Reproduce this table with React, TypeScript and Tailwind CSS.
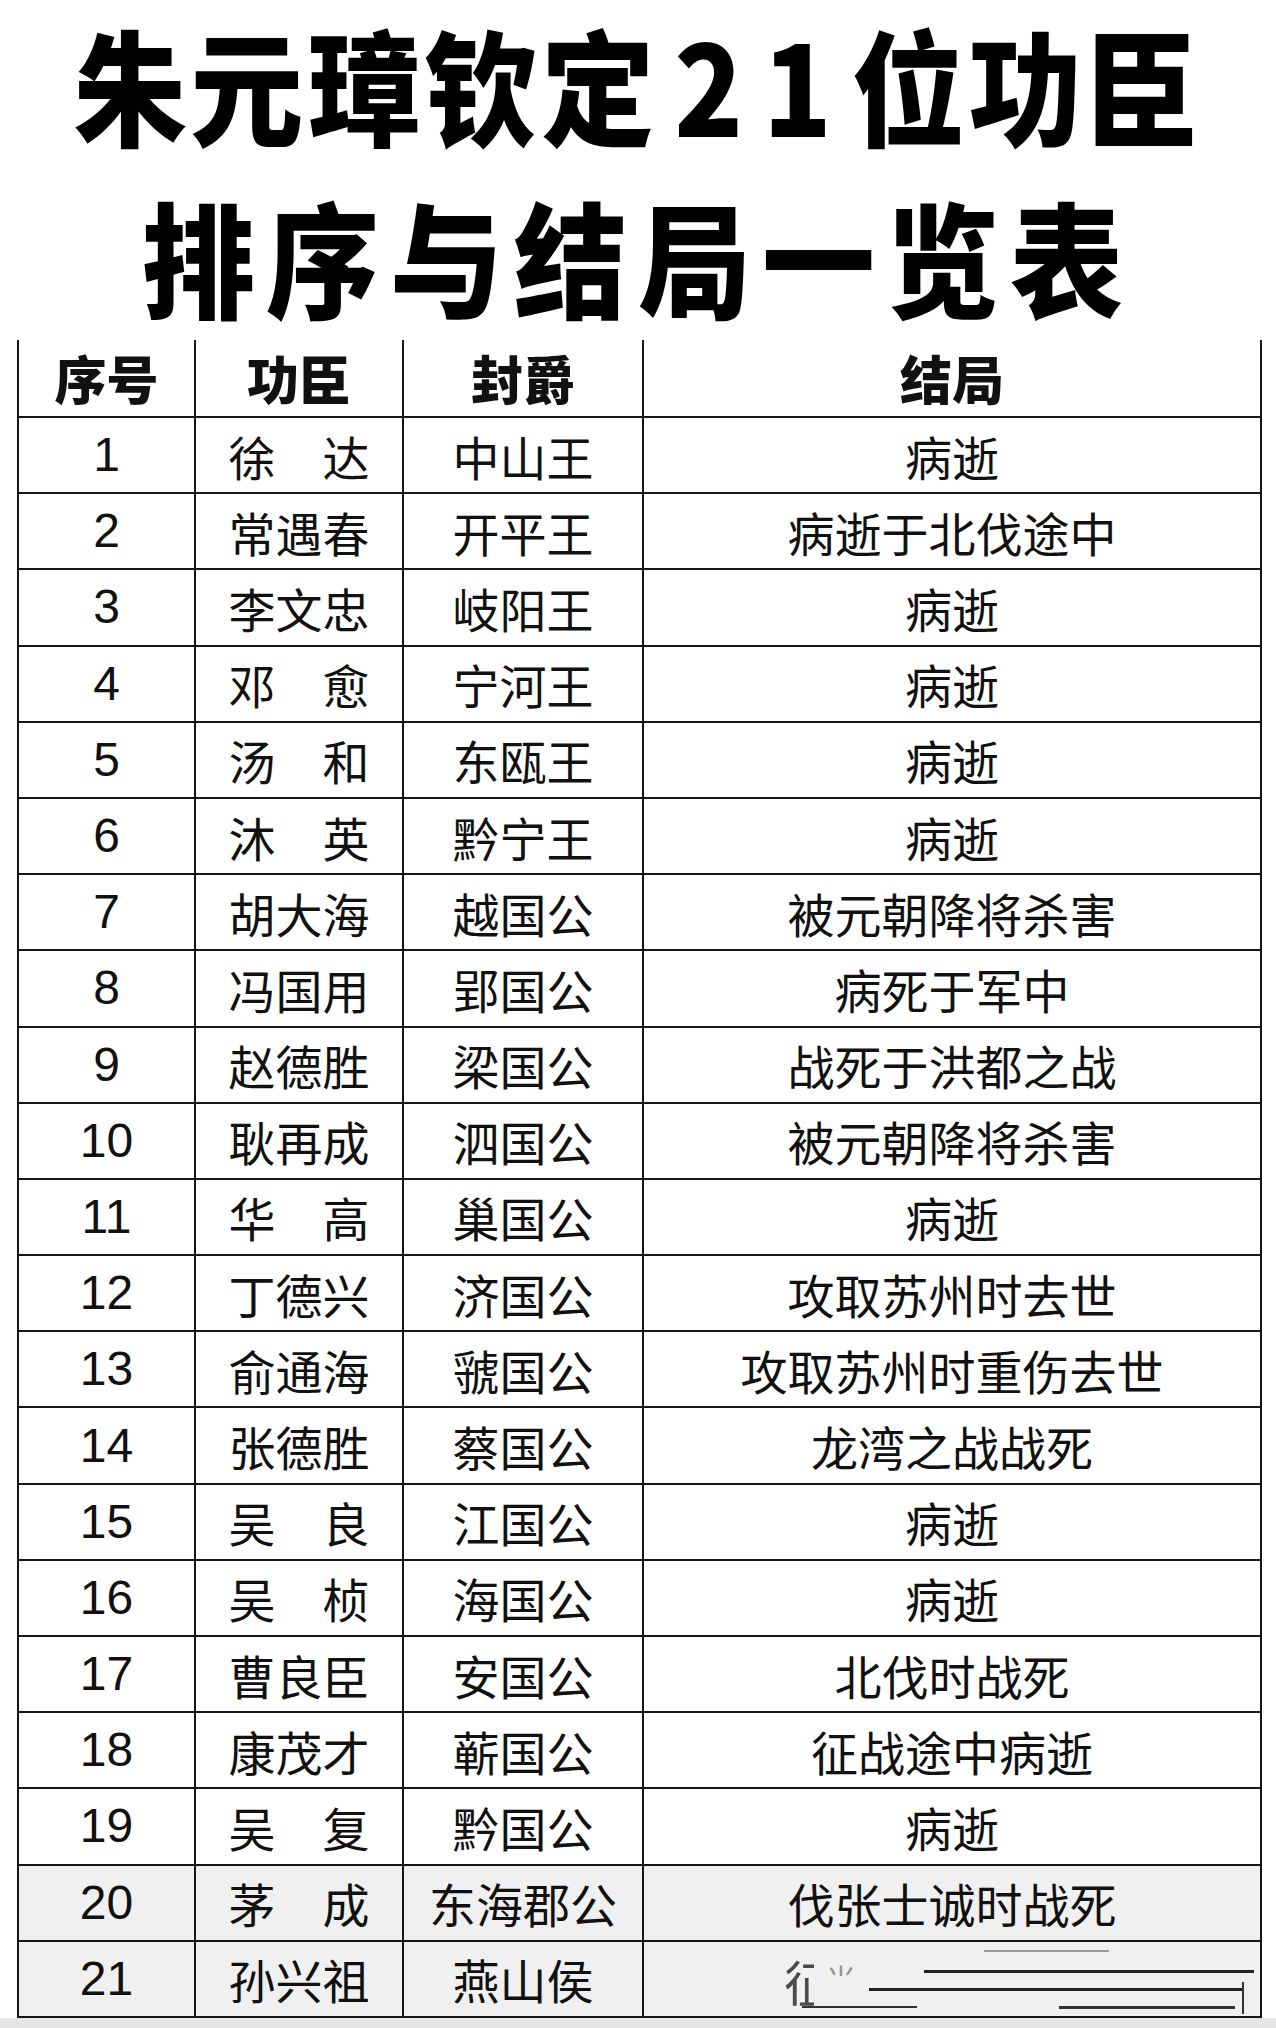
import React from "react";

type Row = {no: number; name: string; title: string; end: string};

const rows: Row[] = [
    {no: 1, name: "徐　达", title: "中山王", end: "病逝"},
    {no: 2, name: "常遇春", title: "开平王", end: "病逝于北伐途中"},
    {no: 3, name: "李文忠", title: "岐阳王", end: "病逝"},
    {no: 4, name: "邓　愈", title: "宁河王", end: "病逝"},
    {no: 5, name: "汤　和", title: "东瓯王", end: "病逝"},
    {no: 6, name: "沐　英", title: "黔宁王", end: "病逝"},
    {no: 7, name: "胡大海", title: "越国公", end: "被元朝降将杀害"},
    {no: 8, name: "冯国用", title: "郢国公", end: "病死于军中"},
    {no: 9, name: "赵德胜", title: "梁国公", end: "战死于洪都之战"},
    {no: 10, name: "耿再成", title: "泗国公", end: "被元朝降将杀害"},
    {no: 11, name: "华　高", title: "巢国公", end: "病逝"},
    {no: 12, name: "丁德兴", title: "济国公", end: "攻取苏州时去世"},
    {no: 13, name: "俞通海", title: "虢国公", end: "攻取苏州时重伤去世"},
    {no: 14, name: "张德胜", title: "蔡国公", end: "龙湾之战战死"},
    {no: 15, name: "吴　良", title: "江国公", end: "病逝"},
    {no: 16, name: "吴　桢", title: "海国公", end: "病逝"},
    {no: 17, name: "曹良臣", title: "安国公", end: "北伐时战死"},
    {no: 18, name: "康茂才", title: "蕲国公", end: "征战途中病逝"},
    {no: 19, name: "吴　复", title: "黔国公", end: "病逝"},
    {no: 20, name: "茅　成", title: "东海郡公", end: "伐张士诚时战死"},
    {no: 21, name: "孙兴祖", title: "燕山侯", end: ""},
];

const cjk = "font-['Noto_Sans_CJK_SC','Noto_Sans',sans-serif]";
const cell = "border-[2px] border-[#161616] text-center align-middle p-0";

function SmudgedCell() {
    // last row's text is broken up by scan artefacts in the source
    return (
        <div className="relative h-full w-full">
            <span className="absolute left-[140px] top-[14px] text-[50px] leading-none text-[#222] opacity-80 [clip-path:inset(0_40%_0_0)]">征</span>
            <span className="absolute left-[182px] top-[20px] text-[30px] leading-none text-[#555] opacity-60">⺌</span>
            <div className="absolute left-[340px] top-[8px] h-[2px] w-[125px] bg-[#9a9a9a]"/>
            <div className="absolute left-[280px] top-[28px] h-[3px] w-[330px] bg-[#222]"/>
            <div className="absolute left-[225px] top-[46px] h-[3px] w-[374px] bg-[#222]"/>
            <div className="absolute left-[158px] top-[64px] h-[2px] w-[115px] bg-[#333]"/>
            <div className="absolute left-[415px] top-[64px] h-[3px] w-[176px] bg-[#333]"/>
            <div className="absolute left-[598px] top-[40px] h-[32px] w-[2px] bg-[#333]"/>
        </div>
    );
}

export default function App() {
    return (
        <div className={`w-[1276px] h-[2028px] bg-white overflow-hidden ${cjk}`}>
            <div className="flex flex-col items-center pt-[18px] gap-[42px] text-black font-black text-[113px] leading-[130px]">
                <div className="scale-y-[1.11] tracking-[4px] whitespace-nowrap">
                    朱元璋钦定<span className="ml-[16px] tracking-[20px]">21</span>位功臣
                </div>
                <div className="scale-y-[1.11] tracking-[11px] whitespace-nowrap">排序与结局一览表</div>
            </div>
            <div className="pl-[17px] pt-[20px]">
                <table className="border-collapse table-fixed w-[1243px] text-[#111]">
                    <colgroup>
                        <col className="w-[177px]"/>
                        <col className="w-[208px]"/>
                        <col className="w-[240px]"/>
                        <col className="w-[618px]"/>
                    </colgroup>
                    <thead>
                        <tr className="h-[77px]">
                            {["序号", "功臣", "封爵", "结局"].map(h => (
                                <th key={h} className={`${cell} border-t-0 text-[52px] font-black leading-none`}>{h}</th>
                            ))}
                        </tr>
                    </thead>
                    <tbody>
                        {rows.map(r => (
                            <tr key={r.no} className={`h-[76.2px] ${r.no >= 20 ? "bg-[#f0f0f0]" : ""}`}>
                                <td className={`${cell} font-['Liberation_Sans',sans-serif] text-[48px] leading-none`}>{r.no}</td>
                                <td className={`${cell} text-[47px] leading-none whitespace-nowrap`}>{r.name}</td>
                                <td className={`${cell} text-[47px] leading-none whitespace-nowrap`}>{r.title}</td>
                                <td className={`${cell} text-[47px] leading-none whitespace-nowrap h-[76.2px]`}>
                                    {r.end ? r.end : <SmudgedCell/>}
                                </td>
                            </tr>
                        ))}
                    </tbody>
                </table>
            </div>
            <div className="h-[20px] bg-[#e6e6e6]"/>
        </div>
    );
}
